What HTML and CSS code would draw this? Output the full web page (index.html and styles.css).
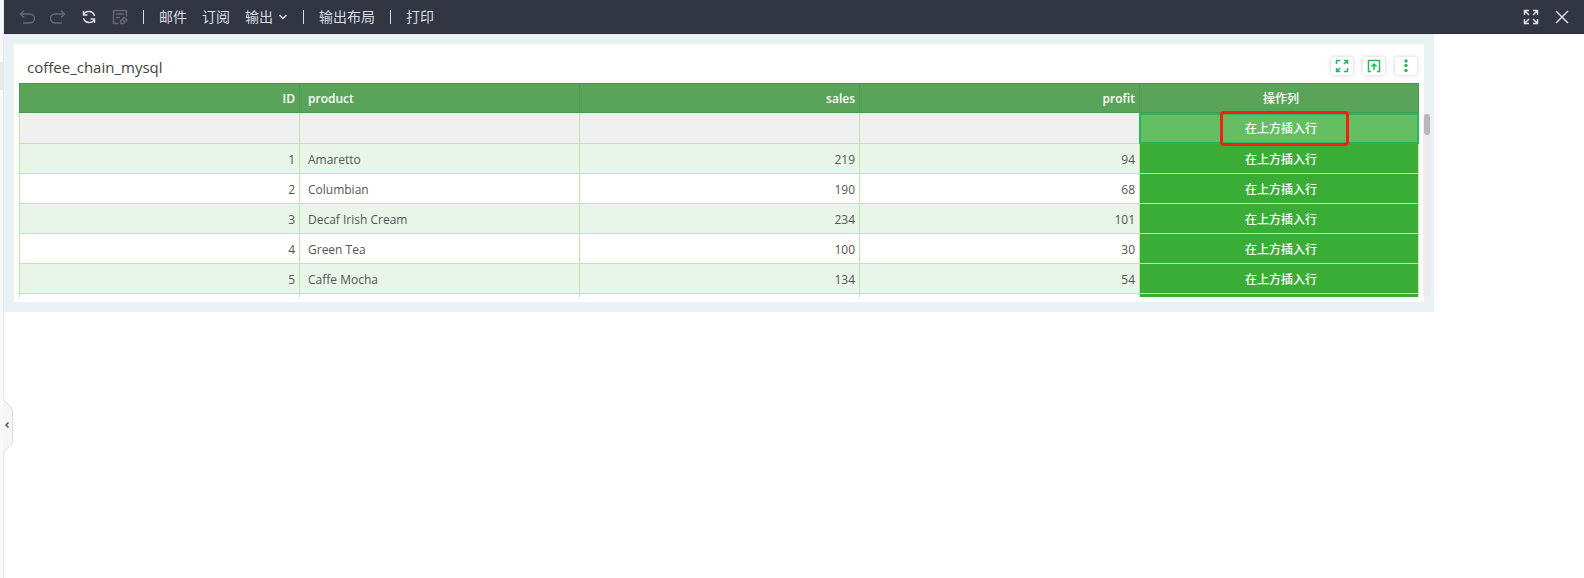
FILE: index.html
```html
<!DOCTYPE html>
<html lang="zh-CN">
    <head>
        <meta charset="UTF-8" />
        <title>coffee_chain_mysql</title>
        <link rel="stylesheet" href="styles.css">
    </head>

    <body>
        <aside class="rail">
            <div class="rail-item"></div>
            <button type="button" class="rail-handle" aria-label="展开">
                <svg width="12" height="60" viewBox="0 0 12 60" fill="none">
                    <path d="M0 1C1 7 9 7 9.5 14V44C9 51 1 51 0 58" fill="#f6f6f6" stroke="#dcdcdc" />
                    <path d="M5.5 25.500L3 28L5.5 30.500" stroke="#555" stroke-width="1.5" />
                </svg>
            </button>
        </aside>

        <div class="page">
            <header class="toolbar">
                <button type="button" class="tool tool-disabled" aria-label="撤销">
                    <svg width="16" height="16" viewBox="0 0 16 16">
                        <path d="M5 1.5L1.5 5L5 8.5M1.5 5H11A4.5 4.5 0 0 1 11 14H4" />
                    </svg>
                </button>
                <button type="button" class="tool tool-disabled" aria-label="重做">
                    <svg width="16" height="16" viewBox="0 0 16 16">
                        <path d="M11 1.5L14.5 5L11 8.5M14.5 5H5A4.5 4.5 0 0 0 5 14H12" />
                    </svg>
                </button>
                <button type="button" class="tool" aria-label="刷新">
                    <svg width="16" height="16" viewBox="0 0 16 16">
                        <path d="M2.5 2V6H6.5M2.5 6C4 1.5 12 1 13.5 7M13.5 14V10H9.5M13.5 10C12 14.5 4 15 2.5 9" />
                    </svg>
                </button>
                <button type="button" class="tool tool-disabled" aria-label="保存">
                    <svg width="16" height="16" viewBox="0 0 16 16">
                        <path d="M6.5 14.5H1.5V1.5H14.5V7.5M4 5H12M4 8.5H8" />
                        <path d="M8.5 12L12 8.5L15 11L11.5 14.5H9ZM10.5 10.5L13 13" />
                    </svg>
                </button>
                <span class="divider"></span>
                <button type="button" class="menu">邮件</button>
                <button type="button" class="menu">订阅</button>
                <button type="button" class="menu">
                    输出
                    <svg width="10" height="8" viewBox="0 0 10 8">
                        <path d="M1.5 2L5 5.5L8.5 2" />
                    </svg>
                </button>
                <span class="divider"></span>
                <button type="button" class="menu">输出布局</button>
                <span class="divider"></span>
                <button type="button" class="menu">打印</button>
                <div class="window-tools">
                    <button type="button" class="tool" aria-label="全屏">
                        <svg width="16" height="16" viewBox="0 0 16 16">
                            <path d="M1.5 6V1.5H6M1.5 1.5L6 6M10 1.5H14.5V6M14.5 1.5L10 6M1.5 10V14.5H6M1.5 14.5L6 10M10 14.5H14.5V10M14.5 14.5L10 10" />
                        </svg>
                    </button>
                    <button type="button" class="tool" aria-label="关闭">
                        <svg width="16" height="16" viewBox="0 0 16 16">
                            <path d="M2 2L14 14M14 2L2 14" />
                        </svg>
                    </button>
                </div>
            </header>

            <main class="dashboard">
                <section class="card">
                    <div class="card-header">
                        <h1>coffee_chain_mysql</h1>
                        <div class="card-tools">
                            <button type="button" aria-label="放大">
                                <svg width="14" height="14" viewBox="0 0 14 14">
                                    <path d="M1.5 5V1.5H5M9 1.5H12.5V5M12.5 1.5L9 5M1.5 9V12.5H5M1.5 12.5L5 9M9 12.5H12.5V9" />
                                </svg>
                            </button>
                            <button type="button" aria-label="导出">
                                <svg width="14" height="14" viewBox="0 0 14 14">
                                    <path d="M4 12.5H1.5V1.5H12.5V12.5H10M7 11V5.5M4.5 7.5L7 5L9.5 7.5" />
                                </svg>
                            </button>
                            <button type="button" aria-label="更多">
                                <svg width="14" height="14" viewBox="0 0 14 14" class="dots">
                                    <circle cx="7" cy="2" r="1.7" />
                                    <circle cx="7" cy="6.5" r="1.7" />
                                    <circle cx="7" cy="11.5" r="1.7" />
                                </svg>
                            </button>
                        </div>
                    </div>
                    <div class="table-area">
                        <div class="table-view">
                            <table>
                                <thead>
                                    <tr>
                                        <th class="num">ID</th>
                                        <th>product</th>
                                        <th class="num">sales</th>
                                        <th class="num">profit</th>
                                        <th class="action">操作列</th>
                                    </tr>
                                </thead>
                                <tbody>
                                    <tr class="new-row">
                                        <td></td>
                                        <td></td>
                                        <td></td>
                                        <td></td>
                                        <td class="action selected">
                                            <button type="button">在上方插入行</button>
                                            <span class="mark"></span>
                                        </td>
                                    </tr>
                                    <tr>
                                        <td class="num">1</td>
                                        <td>Amaretto</td>
                                        <td class="num">219</td>
                                        <td class="num">94</td>
                                        <td class="action"><button type="button">在上方插入行</button></td>
                                    </tr>
                                    <tr>
                                        <td class="num">2</td>
                                        <td>Columbian</td>
                                        <td class="num">190</td>
                                        <td class="num">68</td>
                                        <td class="action"><button type="button">在上方插入行</button></td>
                                    </tr>
                                    <tr>
                                        <td class="num">3</td>
                                        <td>Decaf Irish Cream</td>
                                        <td class="num">234</td>
                                        <td class="num">101</td>
                                        <td class="action"><button type="button">在上方插入行</button></td>
                                    </tr>
                                    <tr>
                                        <td class="num">4</td>
                                        <td>Green Tea</td>
                                        <td class="num">100</td>
                                        <td class="num">30</td>
                                        <td class="action"><button type="button">在上方插入行</button></td>
                                    </tr>
                                    <tr>
                                        <td class="num">5</td>
                                        <td>Caffe Mocha</td>
                                        <td class="num">134</td>
                                        <td class="num">54</td>
                                        <td class="action"><button type="button">在上方插入行</button></td>
                                    </tr>
                                    <tr class="last-row">
                                        <td></td>
                                        <td></td>
                                        <td></td>
                                        <td></td>
                                        <td class="action"></td>
                                    </tr>
                                </tbody>
                            </table>
                        </div>
                        <div class="scrollbar"><div class="thumb"></div></div>
                    </div>
                </section>
            </main>
        </div>
    </body>
</html>
```

FILE: styles.css
```css
* {
    box-sizing: border-box;
}

body {
    margin: 0;
    min-height: 100vh;
    display: flex;
    background-color: #fff;
    font-family: "Open Sans", "Noto Sans CJK SC", sans-serif;
    font-size: 12px;
    color: #555;
}

button {
    padding: 0;
    border: none;
    background: none;
    font: inherit;
    color: inherit;
    cursor: pointer;
}

svg {
    display: block;
    fill: none;
}

/* 左侧收起的面板 */
.rail {
    position: relative;
    width: 4px;
    padding-top: 62px;
    background-color: #f8f9fb;
    border-right: 1px solid #e4e9ef;
}

.rail-item {
    height: 28px;
    background-color: #e8e8e8;
}

.rail-handle {
    position: absolute;
    top: 397px;
    left: 3px;
}

.page {
    flex: 1;
}

/* 工具栏 */
.toolbar {
    display: flex;
    align-items: center;
    height: 34px;
    padding: 0 14px 0 15px;
    background-color: #323542;
    border-bottom: 1px solid #2b2b3b;
    color: #dcdde0;
    font-size: 14px;
}

.toolbar svg {
    stroke: currentColor;
    stroke-width: 1.5;
}

.tool {
    margin-right: 15px;
}

.tool-disabled {
    color: #666975;
}

.divider {
    width: 1px;
    height: 14px;
    margin-right: 15px;
    background-color: #dcdde0;
}

.menu {
    display: flex;
    align-items: center;
    gap: 5px;
    margin-right: 15px;
    line-height: 20px;
}

.window-tools {
    display: flex;
    gap: 15px;
    margin-left: auto;
}

.window-tools .tool {
    margin: 0;
}

/* 报表 */
.dashboard {
    margin-right: 150px;
    padding: 10px;
    background-color: #e9f1f5;
}

.card {
    padding: 5px;
    background-color: #fff;
}

.card-header {
    display: flex;
    align-items: center;
    justify-content: space-between;
    height: 34px;
    padding: 0 2px 0 8px;
}

.card-header h1 {
    margin: 0;
    padding-top: 2px;
    font-size: 15px;
    font-weight: 400;
    line-height: 24px;
    color: #444;
}

.card-tools {
    display: flex;
    gap: 10px;
}

.card-tools button {
    display: flex;
    align-items: center;
    justify-content: center;
    width: 22px;
    height: 18px;
    border-radius: 3px;
    background-color: #fff;
    box-shadow: 0 0 4px rgba(0, 0, 0, 0.2);
}

.card-tools svg {
    stroke: #27b55d;
    stroke-width: 1.5;
}

.card-tools .dots {
    fill: #27b55d;
    stroke: none;
}

.table-area {
    position: relative;
}

.table-view {
    height: 214px;
    overflow: hidden;
}

table {
    width: 100%;
    table-layout: fixed;
    border-spacing: 0;
}

th,
td {
    height: 30px;
    padding: 2px 4px 0 8px;
    text-align: left;
    line-height: 18px;
}

th {
    border: 1px solid #4a974f;
    border-right: none;
    background-color: #5aa459;
    color: #fff;
    font-weight: 600;
}

th:last-child {
    border-right: 1px solid #4a974f;
}

th.action {
    font-weight: 500;
}

td {
    border-left: 1px solid #bfe6a4;
    border-bottom: 1px solid #bfe6a4;
}

td:last-child {
    border-right: 1px solid #bfe6a4;
}

tr:nth-child(even) td {
    background-color: #e8f5e8;
}

tr.new-row td {
    height: 31px;
    background-color: #efefef;
}

.num {
    text-align: right;
}

.action {
    text-align: center;
}

tr td.action,
tr:nth-child(even) td.action {
    background-color: #3aad36;
    color: #fff;
}

td.action button {
    display: block;
    width: 100%;
    font-weight: 500;
}

tr.new-row td.selected {
    position: relative;
    padding: 1px 3px 0 7px;
    border: 2px solid #27b55d;
    background-color: #63bf61;
}

.mark {
    position: absolute;
    top: -4px;
    bottom: -4px;
    left: 79px;
    width: 129px;
    border: 3px solid #ff1d12;
    border-radius: 4px;
    pointer-events: none;
}

.scrollbar {
    position: absolute;
    top: 30px;
    right: -12px;
    bottom: 0;
    width: 8px;
    padding: 1px;
    border-radius: 4px;
    background-color: #ececec;
}

.thumb {
    height: 21px;
    border-radius: 3px;
    background-color: #b8b8b8;
}
```
